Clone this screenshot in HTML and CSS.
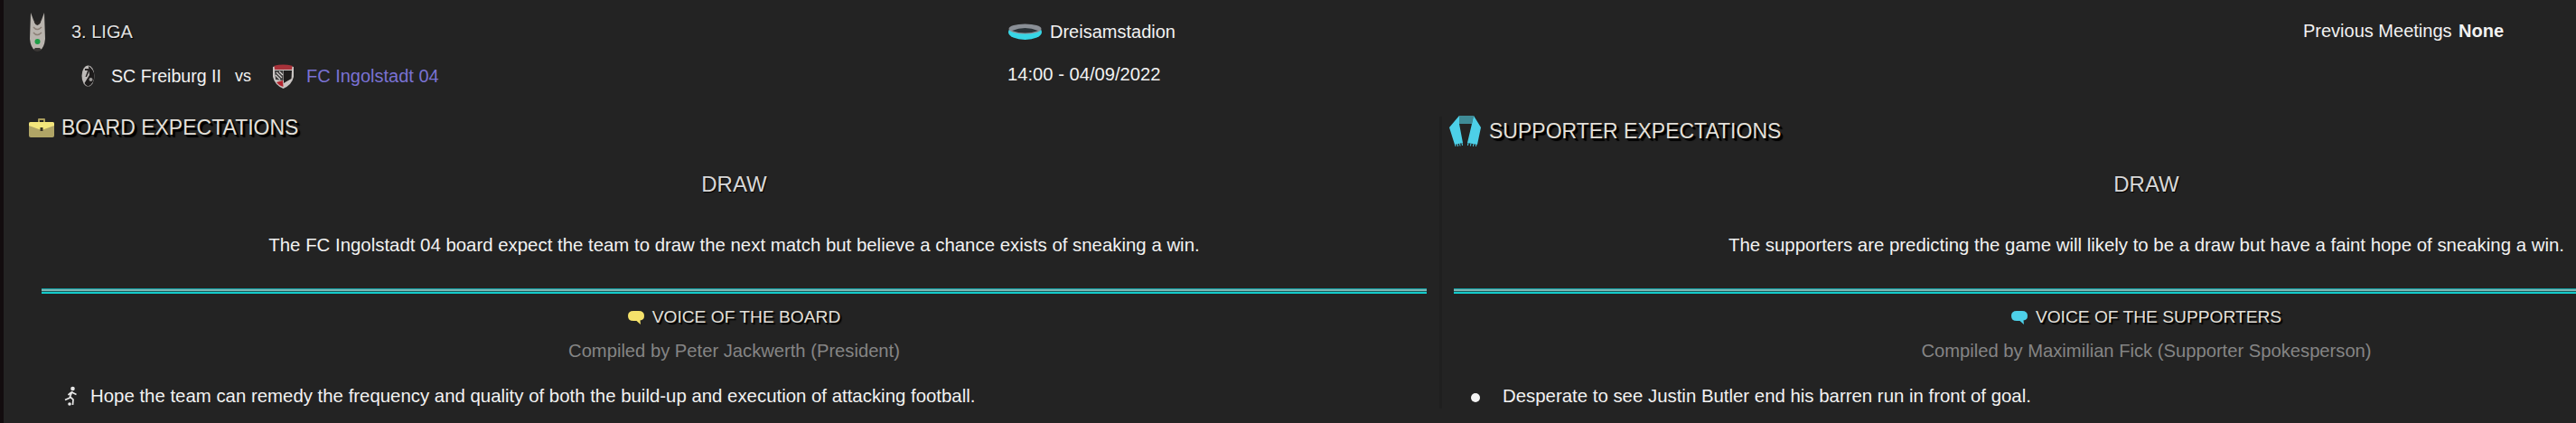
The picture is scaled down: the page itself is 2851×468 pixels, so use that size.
FILE: index.html
```html
<!DOCTYPE html>
<html lang="en">
<head>
    <meta charset="UTF-8">
    <title>Match Preview</title>
    <link rel="stylesheet" href="styles.css">
</head>
<body>

    <div class="page">

        <div class="match-header">
            <div class="match-info">
                <div class="league-row">
                    <svg class="league-icon" viewBox="0 0 17 45">
                        <path d="M1 1 L4 9 Q8 16 13 9 L16 1 L17 30 Q16 40 11 43 L6 43 Q1 40 0 30 Z" fill="#b9b4ae"/>
                        <path d="M4 7 Q8 15 13 7 L12 12 Q8 18 5 12 Z" fill="#2b2725"/>
                        <path d="M4 17 Q8 22 13 17 M4 23 Q8 28 13 23" stroke="#8b7f76" stroke-width="1.5" fill="none"/>
                        <circle cx="8.5" cy="33" r="3" fill="#1f9c46"/>
                        <path d="M4 42 Q8 46 13 42 L11 40 L6 40 Z" fill="#3a3735"/>
                    </svg>
                    <span class="league-name">3. LIGA</span>
                </div>
                <div class="teams-row">
                    <svg class="freiburg-badge" viewBox="0 0 15 24">
                        <ellipse cx="7.5" cy="12" rx="7" ry="11.5" fill="#bdbab8"/>
                        <path d="M8 1 Q14 5 14.5 12 Q14 21 7.5 23.5 Q5 23 3.5 20 L9 11 Z" fill="#1d1b1b"/>
                        <path d="M4 4 L10 4 L6 13 L4.5 13 L7 6 L4 6 Z" fill="#2a2727"/>
                        <circle cx="10.5" cy="16" r="2" fill="#9c9a98"/>
                    </svg>
                    <span class="team-name">SC Freiburg II</span>
                    <span class="versus">vs</span>
                    <svg class="ingolstadt-badge" viewBox="0 0 25 27">
                        <path d="M1 3 Q12 -1 24 3 L24 14 Q22 23 12.5 27 Q3 23 1 14 Z" fill="#c9c4c2"/>
                        <path d="M2.5 1.8 Q12 -0.8 22.5 1.8 L22 6 L3 6 Z" fill="#a8323a"/>
                        <path d="M3 7 L12.5 7 L12.5 18 L4 17 Z" fill="#3c3a3a"/>
                        <path d="M13 7 L22 7 L21.5 16 L13 21 Z" fill="#1e1c1c"/>
                        <path d="M5 20 L12 18 L12.5 25 Q8 24 5 20 Z" fill="#b0222c"/>
                        <path d="M5 9 L11 15 M8 8 L12 12 M4 12 L9 17" stroke="#d8d4d2" stroke-width="1.2"/>
                    </svg>
                    <span class="team-name team-own">FC Ingolstadt 04</span>
                </div>
            </div>
            <div class="venue-info">
                <div class="venue-row">
                    <svg class="stadium-icon" viewBox="0 0 37 18">
                        <ellipse cx="18.5" cy="9.5" rx="18.5" ry="8.5" fill="#38d6e6"/>
                        <ellipse cx="18.5" cy="6" rx="18" ry="5.5" fill="#8a8f96"/>
                        <path d="M4 8 Q18.5 2 33 8 Q18.5 13 4 8 Z" fill="#2a3338"/>
                    </svg>
                    <span>Dreisamstadion</span>
                </div>
                <div class="kickoff">14:00 - 04/09/2022</div>
            </div>
            <div class="meetings">Previous Meetings <strong>None</strong></div>
        </div>

        <div class="panels">

            <div class="panel">
                <div class="panel-title">
                    <svg class="briefcase-icon" viewBox="0 0 28 22">
                        <path d="M10 5 V2 Q10 1 11 1 H17 Q18 1 18 2 V5 H16 V3 H12 V5 Z" fill="#a89c5c"/>
                        <rect x="0" y="5" width="28" height="17" rx="2" fill="#b0a566"/>
                        <path d="M0 7 Q0 5 2 5 H26 Q28 5 28 7 V9 L14 14 L0 9 Z" fill="#f3e67c"/>
                        <rect x="12.5" y="11" width="3" height="4" fill="#3a3626"/>
                    </svg>
                    <h2>BOARD EXPECTATIONS</h2>
                </div>
                <div class="panel-body">
                    <div class="verdict">DRAW</div>
                    <p class="summary">The FC Ingolstadt 04 board expect the team to draw the next match but believe a chance exists of sneaking a win.</p>
                    <div class="double-rule"></div>
                    <div class="voice-title">
                        <svg class="bubble-icon" viewBox="0 0 18 15">
                            <path d="M6 0 H12 Q18 0 18 5.5 Q18 10 13.5 10.5 L14 15 L9.5 11 H6 Q0 11 0 5.5 Q0 0 6 0 Z" fill="#f5e26b"/>
                        </svg>
                        <h3>VOICE OF THE BOARD</h3>
                    </div>
                    <div class="compiled">Compiled by Peter Jackwerth (President)</div>
                </div>
                <div class="voice-item">
                    <span class="item-marker">
                        <svg class="runner-icon" viewBox="0 0 15 22">
                            <circle cx="9.5" cy="3" r="2.3" fill="#e8e8e8"/>
                            <path d="M9 6 L6.5 12 L10 15 L9.5 21 M8.5 7 L13.5 9.5 M8 7 L4.5 10 M6.5 13 L1 15.5" stroke="#e8e8e8" stroke-width="1.7" fill="none"/>
                            <circle cx="6" cy="20" r="1.8" fill="#e8e8e8"/>
                        </svg>
                    </span>
                    <span class="item-text">Hope the team can remedy the frequency and quality of both the build-up and execution of attacking football.</span>
                </div>
            </div>

            <div class="panel panel-supporters">
                <div class="panel-title">
                    <svg class="scarf-icon" viewBox="0 0 35 34">
                        <path d="M11 0 H27 L25 9 H11 Z" fill="#3f8b96"/>
                        <path d="M11 0 L0 13 L6 32 L15 30 L11 9 Z" fill="#4dd0e8"/>
                        <path d="M27 0 L35 13 L31 32 L20 30 L25 9 Z" fill="#4dd0e8"/>
                        <path d="M6.5 31 L7 34 M9 31 L9.5 34 M11.5 30.5 L12 33.5 M14 30 L14.5 33 M21 30 L20.5 33 M24 30.5 L23.5 33.5 M27 31 L26.5 34 M30 31 L29.5 34" stroke="#4dd0e8" stroke-width="1"/>
                    </svg>
                    <h2>SUPPORTER EXPECTATIONS</h2>
                </div>
                <div class="panel-body">
                    <div class="verdict">DRAW</div>
                    <p class="summary">The supporters are predicting the game will likely to be a draw but have a faint hope of sneaking a win.</p>
                    <div class="double-rule"></div>
                    <div class="voice-title">
                        <svg class="bubble-icon" viewBox="0 0 18 15">
                            <path d="M6 0 H12 Q18 0 18 5.5 Q18 10 13.5 10.5 L14 15 L9.5 11 H6 Q0 11 0 5.5 Q0 0 6 0 Z" fill="#4dd0e8"/>
                        </svg>
                        <h3>VOICE OF THE SUPPORTERS</h3>
                    </div>
                    <div class="compiled">Compiled by Maximilian Fick (Supporter Spokesperson)</div>
                </div>
                <div class="voice-item">
                    <span class="item-marker"><span class="bullet-dot"></span></span>
                    <span class="item-text">Desperate to see Justin Butler end his barren run in front of goal.</span>
                </div>
            </div>

        </div>

    </div>

</body>
</html>
```

FILE: styles.css
```css
body {
    margin: 0;
    background-color: #232323;
    font-family: "Liberation Sans", Arial, sans-serif;
    color: #f2f2f2;
    overflow: hidden;
}

.page {
    width: 2851px;
    height: 468px;
    box-sizing: border-box;
    border-left: 4px solid #120c0e;
    overflow: hidden;
    font-size: 20px;
}

.match-header {
    display: flex;
    height: 129px;
    padding-left: 29px;
    box-sizing: border-box;
}

.match-info {
    width: 1082px;
    padding-top: 12px;
}

.league-row {
    display: flex;
    align-items: center;
    height: 47px;
}

.league-icon {
    width: 17px;
    height: 45px;
    margin-right: 29px;
}

.league-name {
    font-size: 20px;
    color: #e0e0e0;
    text-shadow: 1px 1px 1px #000;
}

.teams-row {
    display: flex;
    align-items: center;
    height: 30px;
    margin-top: 10px;
    padding-left: 57px;
}

.freiburg-badge {
    width: 15px;
    height: 24px;
    margin-right: 18px;
}

.team-name {
    font-size: 19.6px;
}

.versus {
    margin: 0 14px 0 15px;
    font-size: 18px;
}

.ingolstadt-badge {
    width: 25px;
    height: 27px;
    margin: 0 13px 0 9px;
}

.team-own {
    font-size: 20px;
    color: #7a72d4;
}

.venue-info {
    width: 1434px;
    padding-top: 22px;
}

.venue-row {
    display: flex;
    align-items: center;
    height: 26px;
}

.stadium-icon {
    width: 37px;
    height: 18px;
    margin: 0 9px 0 1px;
}

.kickoff {
    margin-top: 23px;
    font-size: 20.2px;
}

.meetings {
    padding-top: 23px;
}

.meetings strong {
    margin-left: 2px;
}

.panels {
    display: flex;
}

.panel {
    flex: none;
    width: 1589px;
    box-sizing: border-box;
}

.panel-supporters {
    width: 1560px;
    border-left: 3px solid #1f1f1f;
}

.panel-title {
    display: flex;
    align-items: center;
    height: 24px;
    padding-left: 28px;
}

.panel-supporters .panel-title {
    height: 34px;
    padding-left: 8px;
    margin-top: -1px;
    margin-bottom: -9px;
}

h2 {
    margin: 0;
    font-size: 23px;
    font-weight: normal;
    color: #e4e0da;
    text-shadow: 2px 2px 0 #000, 3px 3px 1px #000;
}

.briefcase-icon {
    width: 28px;
    height: 22px;
    margin-right: 8px;
}

.scarf-icon {
    width: 35px;
    height: 34px;
    margin-right: 9px;
}

.panel-body {
    width: 1533px;
    margin-left: 42px;
    text-align: center;
}

.panel-supporters .panel-body {
    margin-left: 13px;
}

.verdict {
    margin-top: 37px;
    font-size: 24px;
    line-height: 28px;
    color: #d8d8d8;
    text-shadow: 1px 1px 1px #000;
}

.summary {
    margin: 39px 0 0;
    font-size: 20.4px;
    line-height: 28px;
}

.double-rule {
    height: 6px;
    margin-top: 34px;
    background: linear-gradient(#109a9e 0 1px, #7fb5b3 1px 3px, #1c5a5c 3px 4px, #14cccc 4px 6px);
}

.voice-title {
    display: flex;
    justify-content: center;
    align-items: center;
    height: 26px;
    margin-top: 13px;
}

.bubble-icon {
    width: 18px;
    height: 15px;
    margin-right: 9px;
}

h3 {
    margin: 0;
    font-size: 19.2px;
    font-weight: normal;
    color: #e4e0da;
    text-shadow: 2px 2px 1px #000;
}

.compiled {
    margin-top: 12px;
    font-size: 20.2px;
    line-height: 24px;
    color: #858585;
}

.voice-item {
    display: flex;
    align-items: center;
    height: 28px;
    margin-top: 24px;
}

.item-text {
    font-size: 20.4px;
}

.item-marker {
    display: flex;
    justify-content: center;
    flex: none;
    width: 36px;
    margin-left: 56px;
    margin-right: 4px;
}

.panel-supporters .voice-item .item-marker {
    margin-left: 19px;
    margin-right: 12px;
}

.runner-icon {
    width: 15px;
    height: 22px;
}

.bullet-dot {
    width: 10px;
    height: 10px;
    margin-top: 3px;
    border-radius: 50%;
    background-color: #f4f4f4;
}
```
